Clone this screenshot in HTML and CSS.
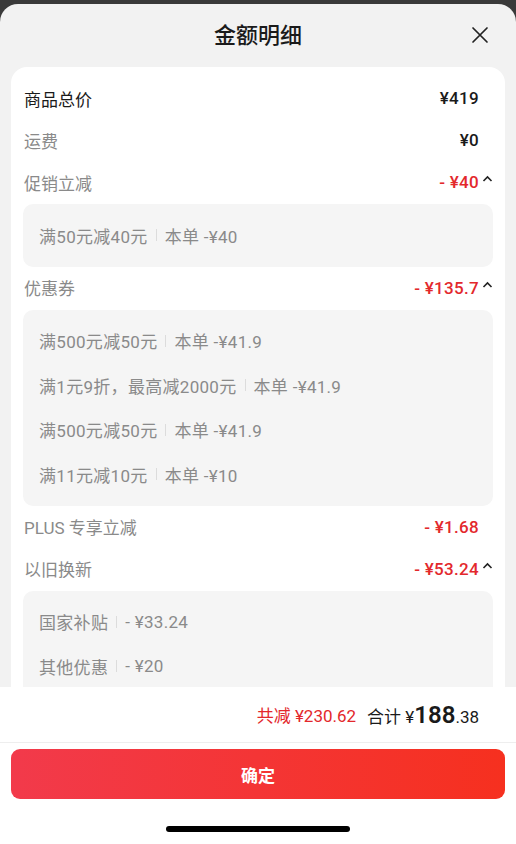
FILE: index.html
```html
<!DOCTYPE html>
<html lang="zh-CN">
<head>
    <meta charset="UTF-8">
    <title>金额明细</title>
    <link rel="stylesheet" href="styles.css">
</head>
<body>
<div class="sheet">
    <div class="head">
        <h1 class="title">金额明细</h1>
        <span class="close">
            <svg width="20" height="20" viewBox="0 0 20 20"><path d="M3 3L17 17M17 3L3 17" stroke="#222" stroke-width="1.7" fill="none" stroke-linecap="round"/></svg>
        </span>
    </div>
    <div class="scroll">
        <div class="card">
            <div class="row">
                <span class="label dark">商品总价</span>
                <span class="value">¥419</span>
                <span class="arrow"></span>
            </div>
            <div class="row">
                <span class="label">运费</span>
                <span class="value">¥0</span>
                <span class="arrow"></span>
            </div>
            <div class="row">
                <span class="label">促销立减</span>
                <span class="value red">- ¥40</span>
                <span class="arrow"><svg width="11" height="7" viewBox="0 0 11 7"><path d="M1.5 6L5.5 2L9.5 6" stroke="#222" stroke-width="1.6" fill="none"/></svg></span>
            </div>
            <div class="sub">
                <div class="item"><span>满50元减40元</span><i class="sep"></i><span>本单 -¥40</span></div>
            </div>
            <div class="row">
                <span class="label">优惠券</span>
                <span class="value red">- ¥135.7</span>
                <span class="arrow"><svg width="11" height="7" viewBox="0 0 11 7"><path d="M1.5 6L5.5 2L9.5 6" stroke="#222" stroke-width="1.6" fill="none"/></svg></span>
            </div>
            <div class="sub">
                <div class="item"><span>满500元减50元</span><i class="sep"></i><span>本单 -¥41.9</span></div>
                <div class="item"><span>满1元9折，最高减2000元</span><i class="sep"></i><span>本单 -¥41.9</span></div>
                <div class="item"><span>满500元减50元</span><i class="sep"></i><span>本单 -¥41.9</span></div>
                <div class="item"><span>满11元减10元</span><i class="sep"></i><span>本单 -¥10</span></div>
            </div>
            <div class="row">
                <span class="label">PLUS 专享立减</span>
                <span class="value red">- ¥1.68</span>
                <span class="arrow"></span>
            </div>
            <div class="row">
                <span class="label">以旧换新</span>
                <span class="value red">- ¥53.24</span>
                <span class="arrow"><svg width="11" height="7" viewBox="0 0 11 7"><path d="M1.5 6L5.5 2L9.5 6" stroke="#222" stroke-width="1.6" fill="none"/></svg></span>
            </div>
            <div class="sub">
                <div class="item"><span>国家补贴</span><i class="sep"></i><span>- ¥33.24</span></div>
                <div class="item"><span>其他优惠</span><i class="sep"></i><span>- ¥20</span></div>
            </div>
        </div>
    </div>
    <div class="foot">
        <div class="total">
            <span class="saved">共减 ¥230.62</span>
            <span class="sum">合计 ¥<b>188</b>.38</span>
        </div>
        <div class="btn-wrap">
            <button class="btn">确定</button>
        </div>
        <div class="home-bar"></div>
    </div>
</div>
</body>
</html>
```

FILE: styles.css
```css
* {
    padding: 0;
    margin: 0;
    box-sizing: border-box;
}

body {
    width: 516px;
    height: 844px;
    overflow: hidden;
    background: #3a3a3a;
    padding-top: 4px;
    font-family: Roboto, "Noto Sans CJK SC", sans-serif;
}

.sheet {
    height: 840px;
    background: #f2f2f2;
    border-radius: 18px 18px 0 0;
    display: flex;
    flex-direction: column;
    overflow: hidden;
}

.head {
    height: 63px;
    flex-shrink: 0;
    position: relative;
    display: flex;
    align-items: center;
    justify-content: center;
}

.title {
    font-size: 22px;
    font-weight: 500;
    color: #1a1a1a;
    margin-top: -5px;
}

.close {
    position: absolute;
    right: 26px;
    top: 21px;
    width: 20px;
    height: 20px;
}

.scroll {
    flex: 1;
    overflow: hidden;
    padding: 0 11px;
}

.card {
    background: #fff;
    border-radius: 16px;
    padding: 11px 12px 20px;
}

.row {
    height: 42px;
    display: flex;
    align-items: center;
    padding-left: 1px;
    padding-bottom: 2px;
}

.label {
    flex: 1;
    font-size: 17px;
    color: #8a8a8a;
}

.label.dark {
    color: #1a1a1a;
}

.value {
    font-size: 17px;
    font-weight: 500;
    color: #1a1a1a;
    letter-spacing: 0.3px;
}

.value.red {
    color: #e3282c;
}

.arrow {
    width: 14px;
    height: 14px;
    display: flex;
    align-items: flex-start;
    justify-content: flex-end;
}

.sub {
    background: #f5f5f5;
    border-radius: 10px;
    padding: 9px 16px;
    margin-bottom: 1px;
}

.item {
    height: 44.5px;
    display: flex;
    align-items: center;
    font-size: 17px;
    letter-spacing: 0.3px;
    color: #8a8a8a;
}

.sep {
    width: 1px;
    height: 12px;
    background: #dcdcdc;
    margin: 0 8px;
}

.foot {
    flex-shrink: 0;
    background: #fff;
    padding-bottom: 12px;
}

.total {
    height: 56px;
    border-bottom: 1px solid #eeeeee;
    display: flex;
    align-items: center;
    justify-content: flex-end;
    padding-right: 37px;
    font-size: 17px;
}

.saved {
    color: #e3282c;
    margin-right: 11px;
}

.sum {
    color: #1a1a1a;
}

.sum b {
    font-size: 24px;
    font-weight: 600;
}

.btn-wrap {
    padding: 6px 11px 0;
}

.btn {
    width: 100%;
    height: 50px;
    border: 0;
    border-radius: 9px;
    background: linear-gradient(90deg, #f23a4b, #f6301f);
    color: #fff;
    font-size: 17px;
    font-weight: 700;
    font-family: "Noto Sans CJK SC", sans-serif;
}

.home-bar {
    width: 184px;
    height: 6px;
    border-radius: 3px;
    background: #000;
    margin: 27px auto 0;
}
```
